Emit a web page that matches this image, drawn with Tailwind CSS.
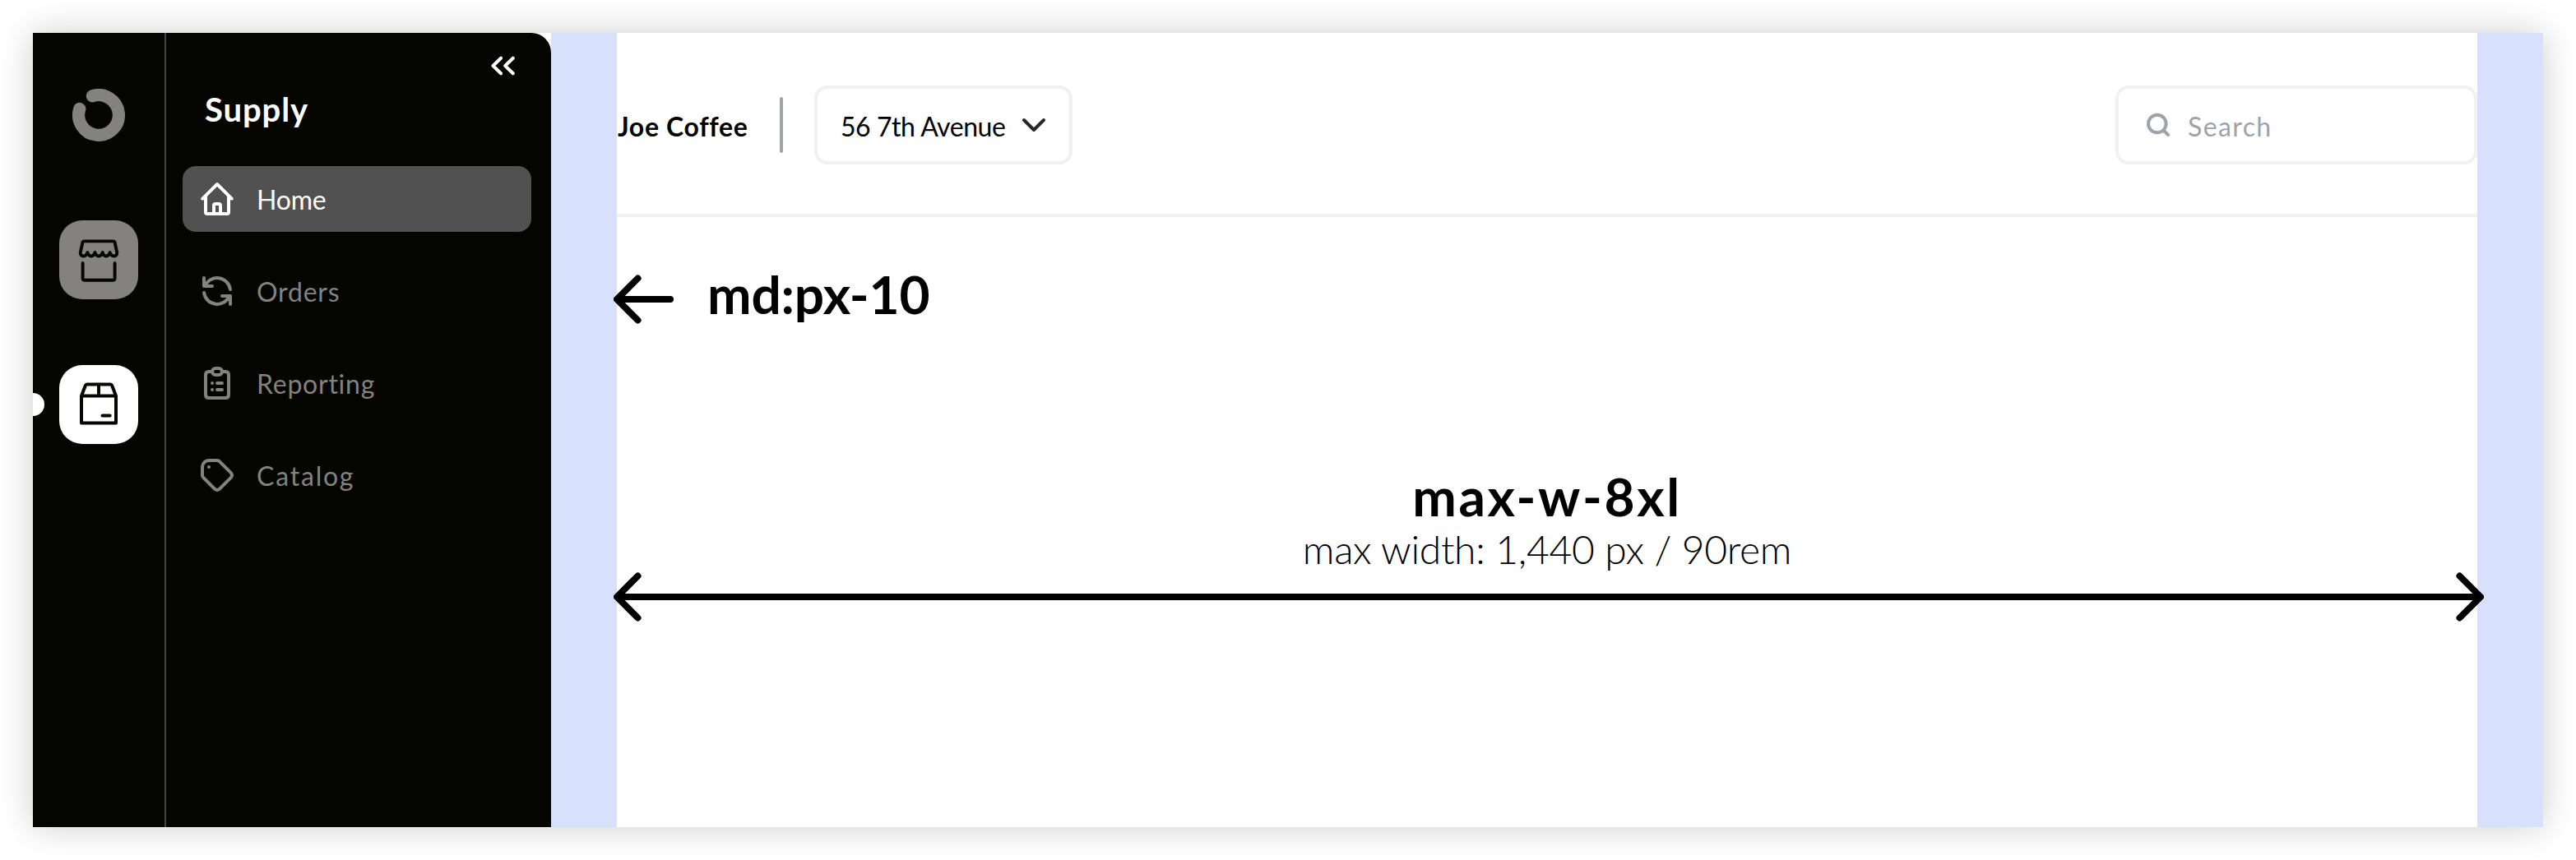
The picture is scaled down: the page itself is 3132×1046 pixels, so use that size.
<!DOCTYPE html>
<html lang="en">
<head>
<meta charset="utf-8">
<title>Supply – layout widths</title>
<script src="https://cdn.jsdelivr.net/npm/@tailwindcss/browser@4"></script>
</head>
<body class="bg-white font-['Lato','Liberation_Sans',sans-serif]">
<div class="p-10 h-[1046px] overflow-hidden">
  <div class="flex h-[966px] bg-white shadow-[0_0_40px_rgba(0,0,0,0.2)]">

    <!-- App rail and section menu -->
    <div class="flex shrink-0 w-[630px] bg-[#050500] rounded-tr-[24px]">
      <nav class="relative flex flex-col items-center gap-20 w-[162px] shrink-0 pt-[52px] border-r-2 border-[#444549] overflow-hidden">
        <span class="absolute -left-[14px] top-[438px] size-7 rounded-full bg-white"></span>
        <a class="flex items-center justify-center size-24">
          <svg class="size-16" viewBox="88 108 64 64" fill="none" stroke="#83827f" stroke-width="15.2" stroke-linecap="round"><path d="M112.4 116.8A24.4 24.4 0 1 1 96.8 132.4"/></svg>
        </a>
        <a class="flex items-center justify-center size-24 rounded-[28px] bg-[#83827f]">
          <svg class="size-24" viewBox="72 268 96 96" fill="none" stroke="#050500" stroke-width="3.9" stroke-linecap="round" stroke-linejoin="round"><path d="M102.500 293.400H137.500Q139.300 293.400 139.600 295L142.300 307.300C142.300 310 140.600 311.500 138.600 311.500C136 311.500 134.400 309.500 133.600 307C132.800 309.500 131.200 311.500 129.100 311.500C127 311.500 125.400 309.500 124.600 307C123.800 309.500 122.100 311.500 120 311.500C117.900 311.500 116.200 309.500 115.400 307C114.600 309.500 113 311.500 110.900 311.500C108.800 311.500 107.200 309.500 106.400 307C105.600 309.500 104 311.500 101.400 311.500C99.400 311.500 97.700 310 97.700 307.300L100.400 295Q100.700 293.400 102.500 293.400Z"/><path d="M100.600 320V338.500Q100.600 340.700 102.800 340.700H137.400Q139.600 340.700 139.600 338.500V320"/></svg>
        </a>
        <a class="flex items-center justify-center size-24 rounded-[28px] bg-white">
          <svg class="size-24" viewBox="72 444 96 96" fill="none" stroke="#050500" stroke-width="4" stroke-linecap="round" stroke-linejoin="round"><path d="M99 481.500H141V514.600H99ZM99 481.500L103.900 468.800Q104.400 467.500 105.800 467.500H134.200Q135.600 467.500 136.100 468.800L141 481.500M120 467.500V481.500M124.500 505.600H133.700"/></svg>
        </a>
      </nav>

      <div class="flex flex-col flex-1 pl-5 pr-6">
        <div class="flex justify-end pt-7 pr-[18px] h-[52px]">
          <svg class="w-[32px] h-6" viewBox="596 68 32 24" fill="none" stroke="#fff" stroke-width="4" stroke-linecap="round" stroke-linejoin="round"><path d="M609 70.700L599.500 80L609 89.300M623.700 70.700L614.200 80L623.700 89.300"/></svg>
        </div>
        <h2 class="pl-[27px] mt-[17px] h-[93px] text-[40px] leading-[48px] font-bold tracking-[0.9px] text-white">Supply</h2>
        <ul class="flex flex-col gap-8 text-[32px] leading-10 text-[#83827f]">
          <li class="flex items-center gap-6 h-20 pl-[18px] rounded-2xl bg-[#515151] text-white">
            <svg class="size-12" viewBox="240 218 48 48" fill="none" stroke="currentColor" stroke-width="4" stroke-linecap="round" stroke-linejoin="round"><path d="M246.300 241.700L264 224L281.700 241.700M250 238.500V258Q250 260 252 260H276Q278 260 278 258V238.500M260 260V250Q260 248 262 248H266Q268 248 268 250V260"/></svg>
            <span class="mt-px tracking-[-0.2px]">Home</span>
          </li>
          <li class="flex items-center gap-6 h-20 pl-[18px]">
            <svg class="size-12" viewBox="240 330 48 48" fill="none" stroke="currentColor" stroke-width="4" stroke-linecap="round" stroke-linejoin="round"><path d="M248 338V348H258M249.200 348A16 16 0 0 1 279.900 352M280 370V360H270M248.100 356A16 16 0 0 0 278.800 360"/></svg>
            <span class="mt-px tracking-[0.8px]">Orders</span>
          </li>
          <li class="flex items-center gap-6 h-20 pl-[18px]">
            <svg class="size-12" viewBox="240 442 48 48" fill="none" stroke="currentColor" stroke-width="4" stroke-linecap="round" stroke-linejoin="round"><path d="M258 452H254Q250 452 250 456V480Q250 484 254 484H274Q278 484 278 480V456Q278 452 274 452H270"/><rect x="258" y="448" width="12" height="8" rx="4"/><path d="M258 466H258.010M264 466H270M258 474H258.010M264 474H270"/></svg>
            <span class="mt-px tracking-[0.75px]">Reporting</span>
          </li>
          <li class="flex items-center gap-6 h-20 pl-[18px]">
            <svg class="size-12" viewBox="240 554 48 48" fill="none" stroke="currentColor" stroke-width="4" stroke-linecap="round" stroke-linejoin="round"><path d="M254 568H254.010M254 560H264Q265.700 560 266.800 561.200L280.800 575.200Q283.200 578 280.800 580.800L266.800 594.800Q264 597.200 261.200 594.800L247.200 580.800Q246 579.700 246 578V568A8 8 0 0 1 254 560Z"/></svg>
            <span class="mt-px tracking-[1.8px]">Catalog</span>
          </li>
        </ul>
      </div>
    </div>

    <!-- Page area: side gutters around the centred container -->
    <div class="flex flex-1">
      <div class="w-20 shrink-0 bg-[#d8e1fb]"></div>
      <main class="flex flex-col w-[2262px] shrink-0">
        <header class="flex items-center h-56 shrink-0 border-b-4 border-[#f1f1ef]">
          <div class="w-[198px] mt-2 text-[32px] leading-10 font-bold tracking-[0.65px] whitespace-nowrap pl-px">Joe Coffee</div>
          <div class="w-1 h-[68px] mt-1 rounded-full bg-[#9ca3ab]"></div>
          <div class="flex items-center justify-between ml-[38px] mt-1 w-[314px] h-24 pl-7 pr-[26px] rounded-2xl border-4 border-[#f1f1ef]">
            <span class="mt-1 text-[32px] leading-10 tracking-[-0.45px] whitespace-nowrap">56 7th Avenue</span>
            <svg class="w-[34px] h-6" viewBox="1239 140 34 24" fill="none" stroke="#26262b" stroke-width="4" stroke-linecap="round" stroke-linejoin="round"><path d="M1244 146L1256 158L1268 146"/></svg>
          </div>
          <div class="flex items-center ml-auto mt-1 w-[440px] h-24 pl-[30px] rounded-2xl border-4 border-[#f1f1ef] text-[#9ca3ab]">
            <svg class="size-8" viewBox="2606 136 32 32" fill="none" stroke="currentColor" stroke-width="4" stroke-linecap="round"><circle cx="2622.800" cy="150.500" r="10.800"/><path d="M2630.500 158.500L2636 164"/></svg>
            <span class="ml-[22px] mt-1 text-[32px] leading-10 tracking-[1.4px]">Search</span>
          </div>
        </header>

        <div class="flex items-start mt-[70px] -ml-1 h-[60px]">
          <svg class="w-[73px] h-[60px] shrink-0" viewBox="0 0 73 60" fill="none" stroke="#000" stroke-width="8" stroke-linecap="round" stroke-linejoin="round"><path d="M69 30H4.500M29.500 4.500L4 30L29.500 55.500"/></svg>
          <span class="ml-[41px] -mt-2 text-[64px] leading-[64px] font-bold tracking-[-0.2px]">md:px-10</span>
        </div>

        <div class="flex flex-col items-center mt-[178px]">
          <span class="text-[64px] leading-[64px] font-bold tracking-[2.6px]">max-w-8xl</span>
          <span class="text-[48px] leading-[64px] font-light tracking-[-0.3px]">max width: 1,440 px / 90rem</span>
        </div>
        <svg class="relative w-[2274px] h-[60px] -mt-1 -ml-1 shrink-0" viewBox="0 0 2274 60" fill="none" stroke="#000" stroke-width="8" stroke-linecap="round" stroke-linejoin="round"><path d="M4.500 30H2269.500M29.500 4.500L4 30L29.500 55.500M2244.500 4.500L2270 30L2244.500 55.500"/></svg>
      </main>
      <div class="w-20 shrink-0 bg-[#d8e1fb]"></div>
    </div>
  </div>
</div>
</body>
</html>
